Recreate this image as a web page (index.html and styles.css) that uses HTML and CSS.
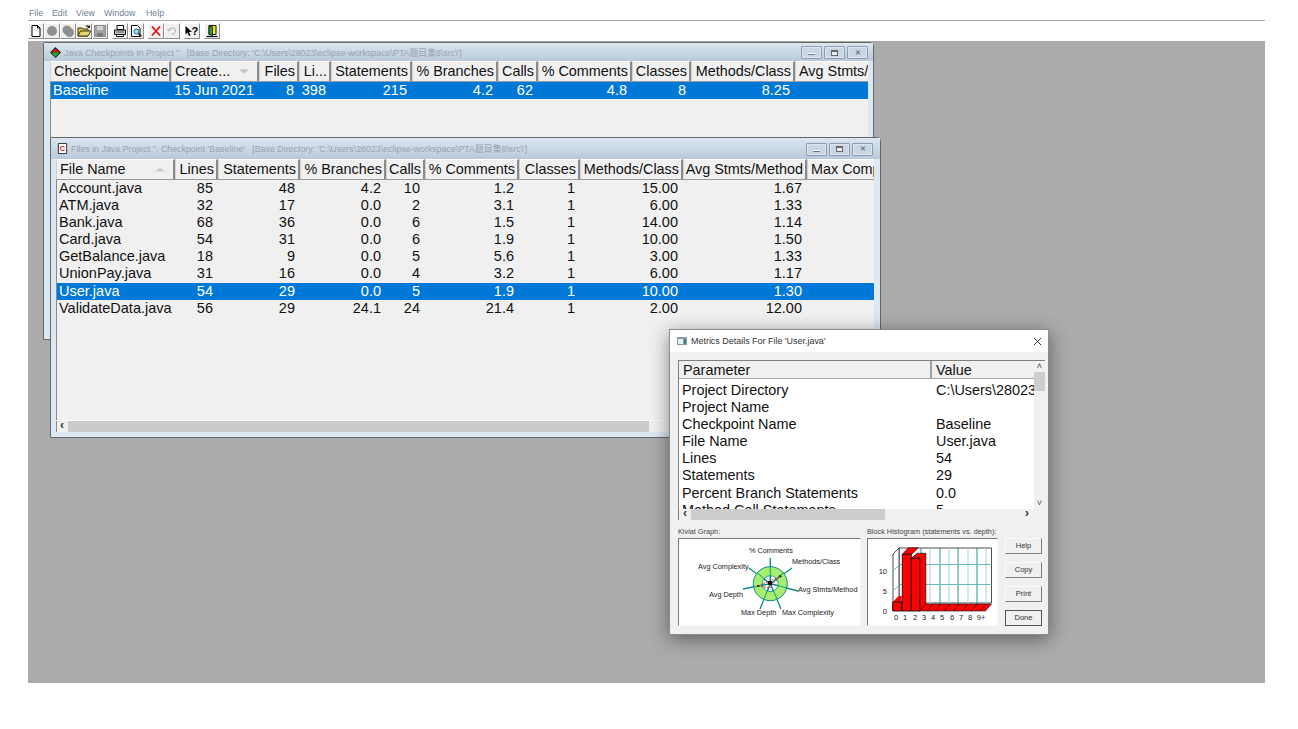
FILE: index.html
```html
<!DOCTYPE html>
<html lang="en">
<head>
<meta charset="utf-8">
<title>SourceMonitor</title>
<link rel="stylesheet" href="styles.css">
</head>
<body>
<div class="app">
  <nav class="menu">
    <span class="menu-item m-file">File</span>
    <span class="menu-item m-edit">Edit</span>
    <span class="menu-item m-view">View</span>
    <span class="menu-item m-window">Window</span>
    <span class="menu-item">Help</span>
  </nav>
  <div class="toolbar">
    <div class="tool-group">
      <span class="tool"><svg viewBox="0 0 14 14"><path d="M3 1.500h5.500L11 4v8.500H3z" fill="#fff" stroke="#000"/><path d="M8.500 1.500V4H11" fill="none" stroke="#000"/></svg></span>
      <span class="tool"><svg viewBox="0 0 14 14"><circle cx="7" cy="7" r="5" fill="#8f8f8f"/></svg></span>
      <span class="tool"><svg viewBox="0 0 14 14"><circle cx="6" cy="6" r="4.500" fill="#8f8f8f"/><circle cx="8.500" cy="8.500" r="4.500" fill="#8f8f8f"/></svg></span>
      <span class="tool"><svg viewBox="0 0 14 14"><path d="M1 4h4l1 1h5v7H1z" fill="#d8c24a" stroke="#3c3410"/><path d="M1 12l2.500-5H14l-3 5z" fill="#e9d768" stroke="#3c3410"/><path d="M8 3c1-2 3-2 4-1l1-1v3h-3l1-1c-1-.6-2-.4-3 0z" fill="#222"/></svg></span>
      <span class="tool"><svg viewBox="0 0 14 14"><path d="M1.500 1.500h11v11h-11z" fill="#a3a3a3" stroke="#8a8a8a"/><path d="M4 2h6v4H4z" fill="#d4d4d4"/><path d="M4 9h6v3.500H4z" fill="#7d7d7d"/></svg></span>
    </div>
    <div class="tool-group">
      <span class="tool"><svg viewBox="0 0 14 14"><path d="M4 1.500h6.500v4H4z" fill="#fff" stroke="#111"/><path d="M1.500 6h11v4.500h-11z" fill="#c9c9c9" stroke="#111"/><path d="M3.500 10.500h7v2h-7z" fill="#fff" stroke="#111"/><path d="M3 8h8" stroke="#555"/></svg></span>
      <span class="tool"><svg viewBox="0 0 14 14"><path d="M2.500 1.500h6L11 4v8.500H2.500z" fill="#fff" stroke="#111"/><circle cx="7.500" cy="7.500" r="2.500" fill="#9fe3f3" stroke="#0b6c86"/><path d="M9.500 9.500l3 3" stroke="#111" stroke-width="1.500"/></svg></span>
    </div>
    <div class="tool-group">
      <span class="tool"><svg viewBox="0 0 14 14"><path d="M3 2.500l8 9M11 2.500l-8 9" stroke="#e01010" stroke-width="1.800"/></svg></span>
      <span class="tool"><svg viewBox="0 0 14 14"><path d="M3.500 7a3.500 3 0 1 1 3 3M3.500 7L2 5.500M3.500 7l2-1" fill="none" stroke="#b0b0b0"/><path d="M7 9h3v2H7z" fill="#cfcfcf"/></svg></span>
    </div>
    <div class="tool-group">
      <span class="tool"><svg viewBox="0 0 14 14"><path d="M.5 2v8.500l2-2L4 12l1.500-.8L4 8h3z" fill="#000"/><text class="tool-q" x="6.500" y="10.500">?</text></svg></span>
    </div>
    <div class="tool-group">
      <span class="tool"><svg viewBox="0 0 14 14"><path d="M4 1.500h7v9H4z" fill="#f2e900" stroke="#111"/><path d="M4 1.500l3.500 1.500v8.500L4 10.500z" fill="#2a9a2a" stroke="#111" stroke-width=".8"/><path d="M1.500 12.500h11" stroke="#111" stroke-width="1.200"/></svg></span>
    </div>
  </div>

  <main class="mdi">
    <section class="window win-checkpoints">
      <header class="titlebar">
        <svg class="title-icon" viewBox="0 0 12 12"><path d="M6 0l6 6-6 6-6-6z" fill="#1a1a1a"/><path d="M6 1.500L10.500 6H1.500z" fill="#e01414"/><path d="M1.500 6h9L6 10.500z" fill="#1cb02b"/></svg>
        <span class="title-text">Java Checkpoints In Project ''&nbsp;&nbsp; [Base Directory: 'C:\Users\28023\eclipse-workspace\PTA题目集8\src\']</span>
        <span class="caption-btns">
          <span class="cap-btn"><i class="g-min"></i></span>
          <span class="cap-btn"><i class="g-max"></i></span>
          <span class="cap-btn g-close">✕</span>
        </span>
      </header>
      <div class="grid-head cols-a">
        <span class="hcell left">Checkpoint Name</span>
        <span class="hcell left sort">Create...<svg class="sort-arrow" viewBox="0 0 11 5"><path d="M0 .5h10L5 4.500z" fill="#c4c4c4"/></svg></span>
        <span class="hcell">Files</span>
        <span class="hcell">Li...</span>
        <span class="hcell">Statements</span>
        <span class="hcell">% Branches</span>
        <span class="hcell">Calls</span>
        <span class="hcell">% Comments</span>
        <span class="hcell">Classes</span>
        <span class="hcell">Methods/Class</span>
        <span class="hcell clip">Avg Stmts/</span>
      </div>
      <div class="grid-body">
        <div class="grid-row cols-a selected">
          <span class="cell name-a">Baseline</span><span class="cell">15 Jun 2021</span><span class="cell">8</span><span class="cell">398</span><span class="cell">215</span><span class="cell">4.2</span><span class="cell">62</span><span class="cell">4.8</span><span class="cell">8</span><span class="cell">8.25</span><span class="cell"></span>
        </div>
      </div>
    </section>

    <section class="window win-files">
      <header class="titlebar">
        <svg class="title-icon" viewBox="0 0 12 12"><path d="M1.500.5h9v11h-9z" fill="#fff" stroke="#222"/><text class="icon-c" x="3" y="8.500">C</text></svg>
        <span class="title-text">Files in Java Project '', Checkpoint 'Baseline'&nbsp;&nbsp; [Base Directory: 'C:\Users\28023\eclipse-workspace\PTA题目集8\src\']</span>
        <span class="caption-btns">
          <span class="cap-btn"><i class="g-min"></i></span>
          <span class="cap-btn"><i class="g-max"></i></span>
          <span class="cap-btn g-close">✕</span>
        </span>
      </header>
      <div class="grid-head cols-b">
        <span class="hcell left sort">File Name<svg class="sort-arrow" viewBox="0 0 11 5"><path d="M5 .5L10 4.500H0z" fill="#d0d0d0"/></svg></span>
        <span class="hcell">Lines</span>
        <span class="hcell">Statements</span>
        <span class="hcell">% Branches</span>
        <span class="hcell">Calls</span>
        <span class="hcell">% Comments</span>
        <span class="hcell">Classes</span>
        <span class="hcell">Methods/Class</span>
        <span class="hcell">Avg Stmts/Method</span>
        <span class="hcell left clip">Max Comp</span>
      </div>
      <div class="grid-body">
        <div class="grid-row cols-b"><span class="cell name">Account.java</span><span class="cell">85</span><span class="cell">48</span><span class="cell">4.2</span><span class="cell">10</span><span class="cell">1.2</span><span class="cell">1</span><span class="cell">15.00</span><span class="cell">1.67</span><span class="cell"></span></div>
        <div class="grid-row cols-b"><span class="cell name">ATM.java</span><span class="cell">32</span><span class="cell">17</span><span class="cell">0.0</span><span class="cell">2</span><span class="cell">3.1</span><span class="cell">1</span><span class="cell">6.00</span><span class="cell">1.33</span><span class="cell"></span></div>
        <div class="grid-row cols-b"><span class="cell name">Bank.java</span><span class="cell">68</span><span class="cell">36</span><span class="cell">0.0</span><span class="cell">6</span><span class="cell">1.5</span><span class="cell">1</span><span class="cell">14.00</span><span class="cell">1.14</span><span class="cell"></span></div>
        <div class="grid-row cols-b"><span class="cell name">Card.java</span><span class="cell">54</span><span class="cell">31</span><span class="cell">0.0</span><span class="cell">6</span><span class="cell">1.9</span><span class="cell">1</span><span class="cell">10.00</span><span class="cell">1.50</span><span class="cell"></span></div>
        <div class="grid-row cols-b"><span class="cell name">GetBalance.java</span><span class="cell">18</span><span class="cell">9</span><span class="cell">0.0</span><span class="cell">5</span><span class="cell">5.6</span><span class="cell">1</span><span class="cell">3.00</span><span class="cell">1.33</span><span class="cell"></span></div>
        <div class="grid-row cols-b"><span class="cell name">UnionPay.java</span><span class="cell">31</span><span class="cell">16</span><span class="cell">0.0</span><span class="cell">4</span><span class="cell">3.2</span><span class="cell">1</span><span class="cell">6.00</span><span class="cell">1.17</span><span class="cell"></span></div>
        <div class="grid-row cols-b selected"><span class="cell name">User.java</span><span class="cell">54</span><span class="cell">29</span><span class="cell">0.0</span><span class="cell">5</span><span class="cell">1.9</span><span class="cell">1</span><span class="cell">10.00</span><span class="cell">1.30</span><span class="cell"></span></div>
        <div class="grid-row cols-b"><span class="cell name">ValidateData.java</span><span class="cell">56</span><span class="cell">29</span><span class="cell">24.1</span><span class="cell">24</span><span class="cell">21.4</span><span class="cell">1</span><span class="cell">2.00</span><span class="cell">12.00</span><span class="cell"></span></div>
      </div>
      <div class="hscroll">
        <span class="arrow">‹</span>
        <span class="thumb"></span>
      </div>
    </section>

    <section class="dialog">
      <header class="dlg-title">
        <svg class="dlg-icon" viewBox="0 0 10 10"><path d="M0 1h10v8H0z" fill="#8d9aa5"/><path d="M1 3h5v5H1z" fill="#e8eef2"/><path d="M7 3h2v5H7z" fill="#2a8d8d"/></svg>
        <span class="dlg-text">Metrics Details For File 'User.java'</span>
        <svg class="dlg-close" viewBox="0 0 10 10"><path d="M1 1l8 8M9 1l-8 8" stroke="#222" stroke-width="1"/></svg>
      </header>
      <div class="dlg-body">
        <div class="list">
          <div class="list-head"><span class="lh lh-param">Parameter</span><span class="lh">Value</span></div>
          <div class="list-rows">
            <div class="list-row"><span class="lc">Project Directory</span><span class="lv">C:\Users\28023\eclipse-workspace</span></div>
            <div class="list-row"><span class="lc">Project Name</span><span class="lv"></span></div>
            <div class="list-row"><span class="lc">Checkpoint Name</span><span class="lv">Baseline</span></div>
            <div class="list-row"><span class="lc">File Name</span><span class="lv">User.java</span></div>
            <div class="list-row"><span class="lc">Lines</span><span class="lv">54</span></div>
            <div class="list-row"><span class="lc">Statements</span><span class="lv">29</span></div>
            <div class="list-row"><span class="lc">Percent Branch Statements</span><span class="lv">0.0</span></div>
            <div class="list-row"><span class="lc">Method Call Statements</span><span class="lv">5</span></div>
          </div>
          <div class="vscroll"><span class="sb-up">˄</span><span class="vthumb"></span><span class="sb-down">˅</span></div>
          <div class="dlg-hscroll"><span class="arrow">‹</span><span class="dlg-thumb"></span><span class="arrow arrow-r">›</span></div>
        </div>
        <div class="charts">
          <figure class="chart chart-kiviat">
            <figcaption class="chart-label">Kiviat Graph:</figcaption>
            <div class="chart-box">
              <svg viewBox="0 0 181 86" class="chart-svg">
                <g stroke="#0b8a8a" stroke-width="1.300" fill="none">
                  <path d="M91.300 44.700V19M91.300 44.700L113 29M91.300 44.700L119 52M91.300 44.700L102 70M91.300 44.700L81 70M91.300 44.700L64 50M91.300 44.700L70 29"/>
                </g>
                <circle cx="91.300" cy="44.700" r="12.500" fill="none" stroke="#a4f06e" stroke-width="9"/>
                <circle cx="91.300" cy="44.700" r="17" fill="none" stroke="#0b8a8a" stroke-width="1"/>
                <circle cx="91.300" cy="44.700" r="8" fill="none" stroke="#0b8a8a" stroke-width=".8"/>
                <path d="M91.300 44.700V28M91.300 44.700L105 33.500M91.300 44.700L108 49M91.300 44.700L98 60M91.300 44.700L85 60M91.300 44.700L75 48M91.300 44.700L78.500 34" stroke="#0b8a8a" stroke-width=".9"/>
                <path d="M79 47L102 37M79 47L91 49L95 44L102 37" fill="none" stroke="#e01010" stroke-width=".8" stroke-dasharray="2 1"/>
                <path d="M78 46l3 1-3 1zM100 36l3 1-2 2zM89 42h4v4h-4z" fill="#111"/>
                <text class="kv" x="70" y="14">% Comments</text>
                <text class="kv" x="113" y="25">Methods/Class</text>
                <text class="kv" x="119" y="53">Avg Stmts/Method</text>
                <text class="kv" x="103" y="76">Max Complexity</text>
                <text class="kv" x="62" y="76">Max Depth</text>
                <text class="kv" x="30" y="58">Avg Depth</text>
                <text class="kv" x="19" y="30">Avg Complexity</text>
              </svg>
            </div>
          </figure>
          <figure class="chart chart-hist">
            <figcaption class="chart-label">Block Histogram (statements vs. depth):</figcaption>
            <div class="chart-box">
              <svg viewBox="0 0 129 86" class="chart-svg">
                <path d="M31 9h92.500v55H31z" fill="#fff" stroke="#222" stroke-width=".8"/>
                <path d="M53 9v56M72 9v56M90 9v56M109 9v56" stroke="#0d8b8b" stroke-width=".9"/>
                <path d="M62 9v56M81 9v56M100 9v56M118 9v56" stroke="#a4d4d4" stroke-width="1"/>
                <path d="M31 25.500h92.500M31 45.500h92.500" stroke="#6dbcbc" stroke-width="1"/>
                <path d="M25 15L31 9v55l-6 8z" fill="#fff" stroke="#222" stroke-width=".8"/>
                <path d="M25 32l6-6M25 52l6-6" stroke="#6dbcbc"/>
                <path d="M51.500 72l6-7h66l-6 7z" fill="#f00" stroke="#111" stroke-width=".6"/>
                <path d="M59 72l6-7M67 72l6-7M76 72l6-7M85 72l6-7M94 72l6-7M103 72l6-7M112 72l6-7" stroke="#222" stroke-width=".9"/>
                <path d="M24.700 63l6-6h3v15h-3z" fill="#f00"/>
                <path d="M24.700 63h9v9h-9z" fill="#f00" stroke="#111" stroke-width=".9"/>
                <path d="M34.300 15.300l6-6.500h10l-6.500 6.500z" fill="#f00" stroke="#111" stroke-width=".6"/>
                <path d="M34.300 15.300h9V72h-9z" fill="#f00" stroke="#111" stroke-width=".9"/>
                <path d="M43.300 19.300l6-5h8.500v51l-6.500 7V19.300z" fill="#f00" stroke="#111" stroke-width=".7"/>
                <path d="M43.300 19.300h8.500V72h-8.500z" fill="#f00" stroke="#111" stroke-width=".9"/>
                <text class="hv" x="19" y="34.500" text-anchor="end">10</text>
                <text class="hv" x="19" y="54.500" text-anchor="end">5</text>
                <text class="hv" x="19" y="74.500" text-anchor="end">0</text>
                <text class="hv" x="28" y="81" text-anchor="middle">0</text>
                <text class="hv" x="37" y="81" text-anchor="middle">1</text>
                <text class="hv" x="47" y="81" text-anchor="middle">2</text>
                <text class="hv" x="56" y="81" text-anchor="middle">3</text>
                <text class="hv" x="65" y="81" text-anchor="middle">4</text>
                <text class="hv" x="74" y="81" text-anchor="middle">5</text>
                <text class="hv" x="84" y="81" text-anchor="middle">6</text>
                <text class="hv" x="93" y="81" text-anchor="middle">7</text>
                <text class="hv" x="102" y="81" text-anchor="middle">8</text>
                <text class="hv" x="113" y="81" text-anchor="middle">9+</text>
              </svg>
            </div>
          </figure>
          <div class="dlg-buttons">
            <span class="dlg-btn">Help</span>
            <span class="dlg-btn">Copy</span>
            <span class="dlg-btn">Print</span>
            <span class="dlg-btn default">Done</span>
          </div>
        </div>
      </div>
    </section>
  </main>
</div>
</body>
</html>
```
FILE: styles.css
```css
* { box-sizing: border-box; }
html, body { margin: 0; padding: 0; background: #fff; height: 100%; overflow: hidden; }
body { font-family: "Liberation Sans", Arial, sans-serif; color: #111; }

.app { width: 1237px; margin-left: 28px; padding-top: 8px; }

.menu {
  height: 13px;
  border-bottom: 1px solid #a8a8a8;
  font-size: 8.800px;
  line-height: 11px;
  color: #6f8093;
  display: flex;
  padding-left: 1px;
}
.menu-item { display: block; }
.m-file { width: 23px; }
.m-edit { width: 24px; }
.m-view { width: 28px; }
.m-window { width: 42px; }

.toolbar { height: 20px; display: flex; gap: 4px; padding-top: 2px; }
.tool-group { display: flex; }
.tool {
  width: 16px; height: 16px;
  background: #f0f0f0;
  border: 1px solid;
  border-color: #fdfdfd #8e8e8e #8e8e8e #fdfdfd;
  display: flex; align-items: center; justify-content: center;
}
.tool svg { width: 14px; height: 14px; display: block; }
.tool-q { font: bold 11px "Liberation Sans", sans-serif; fill: #000; }

.mdi { position: relative; height: 642px; background: #ababab; }

.window {
  position: absolute;
  background: #dce8f4;
  border: 1px solid #666;
  border-top-right-radius: 4px;
  border-top-left-radius: 2px;
  width: 831px;
  display: flex;
  flex-direction: column;
}
.win-checkpoints { left: 15px; top: 1px; height: 298px; padding: 0 5px 6px 6px; }
.win-files { left: 22px; top: 96px; height: 301px; padding: 0 6px 5px 5px; }

.titlebar {
  flex: none;
  display: flex;
  align-items: center;
  background: linear-gradient(#dbe6f1, #b9c9db);
}
.win-checkpoints .titlebar { height: 18px; margin: 0 -5px 0 -6px; padding: 0 5px 0 6px; }
.win-files .titlebar { height: 21px; margin: 0 -6px 0 -5px; padding: 0 7px 0 6px; }
.title-icon { width: 11px; height: 11px; flex: none; margin-right: 3px; }
.icon-c { font: bold 8px "Liberation Sans", sans-serif; fill: #e01010; }
.title-text { font-size: 8.850px; color: #9aa2ad; white-space: pre; font-family: "Liberation Sans", "Noto Sans CJK SC", sans-serif; flex: 1; }
.caption-btns { display: flex; gap: 2px; flex: none; padding-top: 1px; }
.cap-btn {
  width: 21px; height: 13px;
  background: #c9d6e4;
  border: 1px solid #8e9cb0;
  border-radius: 1px;
  box-shadow: inset 0 0 0 1px #dbe5f0;
  display: flex; align-items: center; justify-content: center;
  font-size: 7px; line-height: 10px; color: #6d7a88;
  font-weight: bold;
}
.g-min { display: block; width: 7px; height: 2px; background: #fff; border: 1px solid #777; border-width: 0 0 1px; margin-top: 3px; }
.g-max { display: block; width: 7px; height: 6px; border: 1px solid #666; border-top-width: 2px; background: #e9eef3; }

.grid-head, .grid-row { display: grid; }
.cols-a { grid-template-columns: 121px 88px 40px 32px 81px 86px 40px 94px 59px 104px 73px; }
.cols-b { grid-template-columns: 119px 43px 82px 86px 39px 94px 61px 103px 124px 67px; }
.grid-head {
  flex: none;
  height: 21px;
  background: #f0f0f0;
  font-size: 14.400px;
  line-height: 19px;
  overflow: hidden;
  border-bottom: 1px solid #9a9a9a;
  box-shadow: inset 1px 1px 0 #8a8a8a;
}
.hcell {
  border: 1px solid;
  border-color: #fff #8b8b8b #9a9a9a #d0d0d0;
  border-width: 1px 2px 0 1px;
  text-align: right;
  padding: 0 2px 0 0;
  white-space: nowrap;
  overflow: hidden;
  color: #111;
}
.hcell.left { text-align: left; padding-left: 3px; padding-right: 0; }
.hcell.clip { border-right: 0; padding-right: 0; text-align: left; padding-left: 3px; }
.sort { display: flex; align-items: center; justify-content: space-between; }
.hcell.sort { padding-right: 7px; }
.sort-arrow { width: 11px; height: 5px; flex: none; }

.grid-body { flex: 1; background: #f0f0f0; box-shadow: inset 1px 0 0 #8a8a8a; }
.grid-row {
  height: 17px;
  font-size: 14.500px;
  line-height: 17px;
  white-space: nowrap;
}
.cell { text-align: right; padding-right: 5px; overflow: hidden; color: #111; }
.cell.name { text-align: left; padding: 0 0 0 3px; overflow: visible; }
.cell.name-a { text-align: left; padding: 0 0 0 3px; }
.selected { background: #0078d7; margin-left: 1px; }
.selected.cols-a { grid-template-columns: 120px 88px 40px 32px 81px 86px 40px 94px 59px 104px 73px; }
.selected.cols-b { grid-template-columns: 118px 43px 82px 86px 39px 94px 61px 103px 124px 67px; margin-top: 1px; }
.selected .cell.name { padding-left: 2px; }
.selected .cell.name-a { padding-left: 2px; }
.selected .cell { color: #fff; }

.hscroll {
  flex: none;
  height: 12px;
  background: #f0f0f0;
  display: flex;
  border-top: 1px solid #fbfbfb;
  box-shadow: inset 1px 0 0 #8a8a8a;
}
.arrow { width: 12px; font-size: 12px; line-height: 9px; text-align: center; color: #333; font-weight: bold; flex: none; }
.thumb { width: 581px; background: #cbcbcb; }

.dialog {
  position: absolute;
  left: 641px; top: 288px;
  width: 380px; height: 306px;
  background: #f0f0f0;
  border: 1px solid #8c8c8c;
  box-shadow: 0 4px 18px rgba(0,0,0,.45);
  display: flex;
  flex-direction: column;
}
.dlg-title {
  flex: none;
  height: 22px;
  background: #fff;
  display: flex;
  align-items: center;
  padding: 0 6px 0 7px;
}
.dlg-icon { width: 10px; height: 10px; margin-right: 4px; flex: none; }
.dlg-text { font-size: 8.950px; color: #333; flex: 1; }
.dlg-close { width: 9px; height: 9px; flex: none; }
.dlg-body { flex: 1; padding: 8px 4px 7px 8px; display: flex; flex-direction: column; }

.list {
  flex: none;
  position: relative;
  height: 160px;
  width: 367px;
  background: #fff;
  border-top: 1px solid #7f7f7f;
  border-left: 1px solid #7f7f7f;
  overflow: hidden;
}
.list-head { display: flex; height: 18px; background: #f0f0f0; font-size: 14.400px; line-height: 18px; border-bottom: 1px solid #a5a5a5; }
.lh { padding-left: 4px; }
.lh-param { width: 253px; border-right: 2px solid #a0a0a0; }
.list-rows { height: 130px; overflow: hidden; padding-top: 3px; }
.list-row { display: flex; height: 17.100px; font-size: 14.400px; line-height: 17px; white-space: nowrap; }
.lc { width: 254px; padding-left: 3px; flex: none; }
.lv { padding-left: 3px; }
.vscroll {
  position: absolute; right: 0; top: 0; bottom: 11px; width: 11px;
  background: #f0f0f0;
  display: flex; flex-direction: column; align-items: stretch;
  font-size: 9px; line-height: 11px; text-align: center; color: #444;
}
.sb-up { height: 11px; }
.vthumb { height: 19px; background: #cdcdcd; }
.sb-down { margin-top: auto; height: 11px; }
.dlg-hscroll {
  position: absolute; left: 0; right: 0; bottom: 0; height: 11px;
  background: #f0f0f0; display: flex;
}
.dlg-thumb { width: 194px; background: #cdcdcd; }
.arrow-r { margin-left: auto; margin-right: 12px; }

.charts { flex: none; display: flex; margin-top: 5px; }
.chart { margin: 0; }
.chart-kiviat { width: 183px; margin-right: 6px; }
.chart-hist { width: 131px; margin-right: 7px; }
.chart-label { height: 13px; line-height: 13px; color: #444; white-space: nowrap; font-size: 7.300px; }
.chart-box { height: 88px; background: #fff; border: 1px solid; border-color: #7b7b7b #f8f8f8 #f8f8f8 #7b7b7b; }
.chart-svg { display: block; width: 100%; height: 86px; }
.kv { font: 7.300px "Liberation Sans", sans-serif; fill: #222; }
.hv { font: 7.500px "Liberation Sans", sans-serif; fill: #222; }

.dlg-buttons { width: 37px; padding-top: 13px; display: flex; flex-direction: column; gap: 8px; }
.dlg-btn {
  height: 16px;
  background: #f0f0f0;
  border: 1px solid;
  border-color: #fafafa #7d7d7d #7d7d7d #fafafa;
  font-size: 7.500px;
  line-height: 14px;
  text-align: center;
  color: #333;
}
.dlg-btn.default { border-color: #555; }
```
